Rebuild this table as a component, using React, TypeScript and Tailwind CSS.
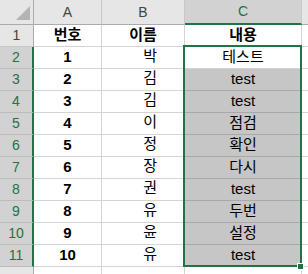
const rows: [string, string, string][] = [
  ["1", "박", "테스트"],
  ["2", "김", "test"],
  ["3", "김", "test"],
  ["4", "이", "점검"],
  ["5", "정", "확인"],
  ["6", "장", "다시"],
  ["7", "권", "test"],
  ["8", "유", "두번"],
  ["9", "윤", "설정"],
  ["10", "유", "test"],
];

const font = "font-['Liberation_Sans','Noto_Sans_CJK_KR',sans-serif]";

export default function App() {
  return (
    <div className={`relative w-[308px] h-[274px] overflow-hidden bg-white text-black ${font}`}>
      <div className="grid grid-cols-[34px_68px_83px_117px_6px] grid-rows-[25px_repeat(11,22px)_8px]">
        {/* corner */}
        <div className="relative bg-[#e6e6e6] border-r border-b border-r-[#ababab] border-b-[#ababab]">
          <svg className="absolute left-[16px] top-[6px]" width="14" height="14" viewBox="0 0 14 14">
            <polygon points="14,0 14,14 0,14" fill="#b4b4b4" />
          </svg>
        </div>
        {/* column headers */}
        <div className="flex items-center justify-center bg-[#e6e6e6] border-r border-b border-r-[#c8c8c8] border-b-[#ababab] text-[14px] text-[#444]">
          A
        </div>
        <div className="flex items-center justify-center bg-[#e6e6e6] border-r border-b border-r-[#c8c8c8] border-b-[#ababab] text-[14px] text-[#444]">
          B
        </div>
        <div className="flex items-center justify-center bg-[#d2d2d2] border-r border-b-2 border-r-[#c8c8c8] border-b-[#217346] text-[14px] text-[#217346]">
          C
        </div>
        <div className="bg-[#e6e6e6] border-b border-b-[#ababab]" />

        {/* row 1 */}
        <div className="flex items-center justify-center bg-[#e6e6e6] border-r border-b border-r-[#ababab] border-b-[#c8c8c8] text-[14px] text-[#444]">
          1
        </div>
        <div className="flex items-center justify-center border-r border-b border-[#d4d4d4] text-[15px] font-bold">번호</div>
        <div className="flex items-center justify-center border-r border-b border-[#d4d4d4] text-[15px] font-bold">이름</div>
        <div className="flex items-center justify-center border-r border-b border-[#d4d4d4] text-[15px] font-bold">내용</div>
        <div className="border-b border-[#d4d4d4]" />

        {rows.map(([num, name, text], i) => {
          const active = i === 0;
          return (
            <div key={i} className="contents">
              <div className="flex items-center justify-center bg-[#d2d2d2] border-r-2 border-b border-r-[#217346] border-b-[#bcbcbc] text-[14px] text-[#217346]">
                {i + 2}
              </div>
              <div className="flex items-center justify-center border-r border-b border-[#d4d4d4] text-[15px] font-bold">
                {num}
              </div>
              <div className="flex items-end justify-end pr-[27px] pb-[1px] border-r border-b border-[#d4d4d4] text-[15px]">
                {name}
              </div>
              <div
                className={
                  active
                    ? "flex items-center justify-center border-r border-b border-[#d4d4d4] text-[15px]"
                    : "flex items-center justify-center bg-[#c6c6c6] border-r border-b border-r-[#d4d4d4] border-b-[#a8a8a8] text-[15px]"
                }
              >
                {text}
              </div>
              <div className="border-b border-[#d4d4d4]" />
            </div>
          );
        })}

        {/* partial row 12 */}
        <div className="bg-[#e6e6e6] border-r border-r-[#ababab]" />
        <div className="border-r border-[#d4d4d4]" />
        <div className="border-r border-[#d4d4d4]" />
        <div className="border-r border-[#d4d4d4]" />
        <div />
      </div>

      {/* selection outline C2:C11 */}
      <div className="absolute left-[183px] top-[45px] w-[119px] h-[222px] border-2 border-[#217346] pointer-events-none" />
      {/* fill handle */}
      <div className="absolute left-[297px] top-[263px] w-[7px] h-[7px] bg-[#217346] border border-white" />
    </div>
  );
}
